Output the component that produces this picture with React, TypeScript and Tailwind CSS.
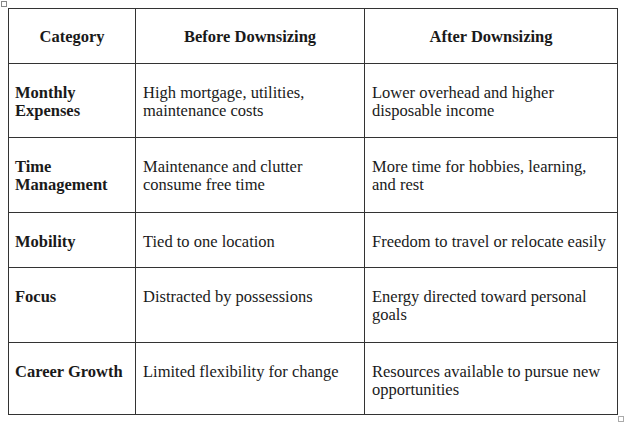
const rows = [
  {
    category: "Monthly Expenses",
    before: "High mortgage, utilities, maintenance costs",
    after: "Lower overhead and higher disposable income",
    h: "h-[74px]",
  },
  {
    category: "Time Management",
    before: "Maintenance and clutter consume free time",
    after: "More time for hobbies, learning, and rest",
    h: "h-[75px]",
  },
  {
    category: "Mobility",
    before: "Tied to one location",
    after: "Freedom to travel or relocate easily",
    h: "h-[55px]",
  },
  {
    category: "Focus",
    before: "Distracted by possessions",
    after: "Energy directed toward personal goals",
    h: "h-[75px]",
  },
  {
    category: "Career Growth",
    before: "Limited flexibility for change",
    after: "Resources available to pursue new opportunities",
    h: "h-[72px]",
  },
];

const App = () => {
  return (
    <div className="relative w-[624px] h-[422px] bg-white pt-[8px] pl-[8px] font-['Liberation_Serif',serif] text-[16.5px] leading-[18px] text-[#1a1a1a]">
      {/* table move handle */}
      <div className="absolute left-[1px] top-[1px] w-[6px] h-[6px] border border-[#888] bg-white" />
      {/* resize handle */}
      <div className="absolute left-[618px] top-[416px] w-[6px] h-[6px] border border-[#aaa] bg-white" />

      <table className="w-[609px] table-fixed border-collapse">
        <colgroup>
          <col className="w-[127px]" />
          <col className="w-[229px]" />
          <col className="w-[253px]" />
        </colgroup>
        <thead>
          <tr className="h-[55px]">
            <th className="border border-[#333] font-bold text-center align-middle px-[7px] pt-[2px]">Category</th>
            <th className="border border-[#333] font-bold text-center align-middle px-[7px] pt-[2px]">Before Downsizing</th>
            <th className="border border-[#333] font-bold text-center align-middle px-[7px] pt-[2px]">After Downsizing</th>
          </tr>
        </thead>
        <tbody>
          {rows.map((r) => (
            <tr key={r.category} className={r.h}>
              <td className="border border-[#333] font-bold align-top pt-[20px] pl-[6px] pr-[4px]">{r.category}</td>
              <td className="border border-[#333] align-top pt-[20px] pl-[7px] pr-[6px]">{r.before}</td>
              <td className="border border-[#333] align-top pt-[20px] pl-[7px] pr-[8px]">{r.after}</td>
            </tr>
          ))}
        </tbody>
      </table>
    </div>
  );
};

export default App;
